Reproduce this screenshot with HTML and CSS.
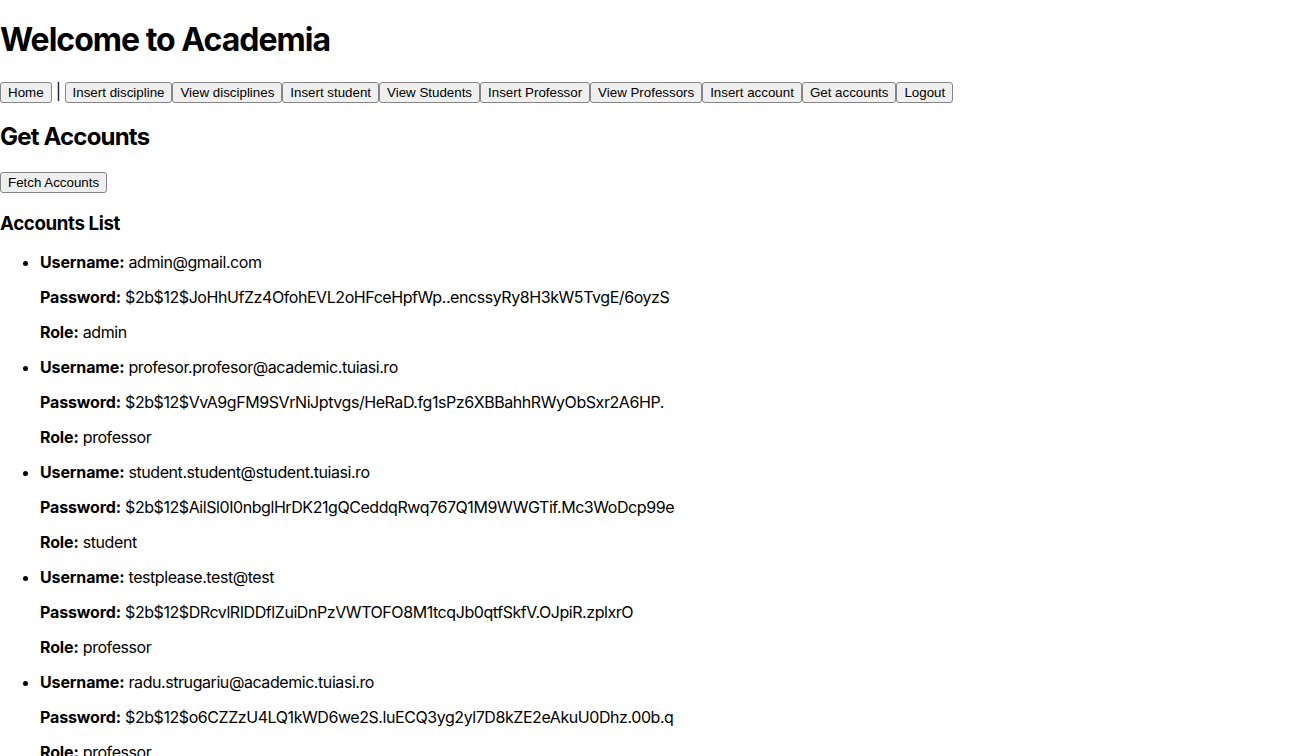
FILE: index.html
```html
<!DOCTYPE html>
<html lang="en">
<head>
<meta charset="utf-8">
<title>Academia</title>
<link rel="stylesheet" href="styles.css">
</head>
<body>
<div class="app">
  <h1 class="title">Welcome to Academia</h1>
  <div class="nav"><button class="btn">Home</button> | <button class="btn">Insert discipline</button><button class="btn">View disciplines</button><button class="btn">Insert student</button><button class="btn">View Students</button><button class="btn">Insert Professor</button><button class="btn">View Professors</button><button class="btn">Insert account</button><button class="btn">Get accounts</button><button class="btn">Logout</button></div>
  <div class="section">
    <h2 class="section-title">Get Accounts</h2>
    <div class="actions"><button class="btn">Fetch Accounts</button></div>
    <h3 class="list-title">Accounts List</h3>
    <ul class="accounts">
      <li>
        <p><strong>Username:</strong> admin@gmail.com</p>
        <p><strong>Password:</strong> $2b$12$JoHhUfZz4OfohEVL2oHFceHpfWp..encssyRy8H3kW5TvgE/6oyzS</p>
        <p><strong>Role:</strong> admin</p>
      </li>
      <li>
        <p><strong>Username:</strong> profesor.profesor@academic.tuiasi.ro</p>
        <p><strong>Password:</strong> $2b$12$VvA9gFM9SVrNiJptvgs/HeRaD.fg1sPz6XBBahhRWyObSxr2A6HP.</p>
        <p><strong>Role:</strong> professor</p>
      </li>
      <li>
        <p><strong>Username:</strong> student.student@student.tuiasi.ro</p>
        <p><strong>Password:</strong> $2b$12$AilSl0I0nbglHrDK21gQCeddqRwq767Q1M9WWGTif.Mc3WoDcp99e</p>
        <p><strong>Role:</strong> student</p>
      </li>
      <li>
        <p><strong>Username:</strong> testplease.test@test</p>
        <p><strong>Password:</strong> $2b$12$DRcvlRIDDflZuiDnPzVWTOFO8M1tcqJb0qtfSkfV.OJpiR.zplxrO</p>
        <p><strong>Role:</strong> professor</p>
      </li>
      <li>
        <p><strong>Username:</strong> radu.strugariu@academic.tuiasi.ro</p>
        <p><strong>Password:</strong> $2b$12$o6CZZzU4LQ1kWD6we2S.luECQ3yg2yl7D8kZE2eAkuU0Dhz.00b.q</p>
        <p><strong>Role:</strong> professor</p>
      </li>
    </ul>
  </div>
</div>
</body>
</html>
```
FILE: styles.css
```css
html, body {
  margin: 0;
  padding: 0;
  background: #ffffff;
}
body {
  font-family: Inter, "Noto Sans", sans-serif;
  font-size: 16px;
  letter-spacing: -0.027em;
  color: #000;
}
.title {
  font-size: 32px;
  font-weight: 700;
  line-height: 1.19;
  letter-spacing: -0.031em;
  margin: 21.44px 0;
}
.section-title {
  font-size: 24px;
  font-weight: 700;
  line-height: 1.19;
  letter-spacing: -0.034em;
  margin: 20.5px 0 19.92px;
}
.list-title {
  font-size: 18.72px;
  font-weight: 700;
  line-height: 1.19;
  letter-spacing: -0.02em;
  margin: 20.5px 0 17.5px;
}
.actions {
  display: flex;
}
.btn {
  font-family: "Liberation Sans", Arial, sans-serif;
  font-size: 13.333px;
  line-height: 15px;
  letter-spacing: 0;
  padding: 2px 7px;
  margin: 0;
  color: #000;
  background: #efefef;
  border: 1px solid #858585;
  border-radius: 3px;
}
.accounts {
  margin: 16px 0;
  padding-left: 40px;
  line-height: 19px;
}
.accounts p {
  margin: 16px 0;
}
.accounts strong {
  letter-spacing: -0.008em;
}
```
